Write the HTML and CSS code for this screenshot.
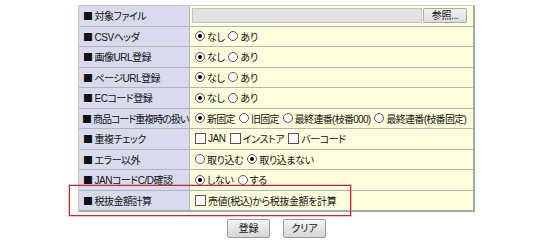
FILE: index.html
```html
<!DOCTYPE html>
<html lang="ja">
<head>
<meta charset="utf-8">
<link rel="stylesheet" href="styles.css">
</head>
<body>
<div class="page">
  <div class="form">
    <div class="lbl"><span class="sq">■</span>対象ファイル</div>
    <div class="val file"><span class="field"></span><span class="browse">参照...</span></div>

    <div class="lbl"><span class="sq">■</span>CSVヘッダ</div>
    <div class="val"><span class="opt"><i class="radio on"></i>なし</span><span class="opt"><i class="radio"></i>あり</span></div>

    <div class="lbl"><span class="sq">■</span>画像URL登録</div>
    <div class="val"><span class="opt"><i class="radio on"></i>なし</span><span class="opt"><i class="radio"></i>あり</span></div>

    <div class="lbl"><span class="sq">■</span>ページURL登録</div>
    <div class="val"><span class="opt"><i class="radio on"></i>なし</span><span class="opt"><i class="radio"></i>あり</span></div>

    <div class="lbl"><span class="sq">■</span>ECコード登録</div>
    <div class="val"><span class="opt"><i class="radio on"></i>なし</span><span class="opt"><i class="radio"></i>あり</span></div>

    <div class="lbl tight"><span class="sq">■</span>商品コード重複時の扱い</div>
    <div class="val tight"><span class="opt"><i class="radio on"></i>新固定</span><span class="opt"><i class="radio"></i>旧固定</span><span class="opt"><i class="radio"></i>最終連番(枝番000)</span><span class="opt"><i class="radio"></i>最終連番(枝番固定)</span></div>

    <div class="lbl"><span class="sq">■</span>重複チェック</div>
    <div class="val"><span class="opt"><i class="check"></i>JAN</span><span class="opt"><i class="check"></i>インストア</span><span class="opt"><i class="check"></i>バーコード</span></div>

    <div class="lbl"><span class="sq">■</span>エラー以外</div>
    <div class="val"><span class="opt"><i class="radio"></i>取り込む</span><span class="opt"><i class="radio on"></i>取り込まない</span></div>

    <div class="lbl"><span class="sq">■</span>JANコードC/D確認</div>
    <div class="val"><span class="opt"><i class="radio on"></i>しない</span><span class="opt"><i class="radio"></i>する</span></div>

    <div class="lbl"><span class="sq">■</span>税抜金額計算</div>
    <div class="val"><span class="opt"><i class="check"></i>売値(税込)から税抜金額を計算</span></div>

    <div class="highlight"></div>
  </div>
  <div class="buttons">
    <span class="btn">登録</span>
    <span class="btn">クリア</span>
  </div>
</div>
</body>
</html>
```

FILE: styles.css
```css
html, body {
  margin: 0;
  padding: 0;
  background: #ffffff;
}
body {
  padding-left: 3px;
  font-family: "Liberation Sans", "Noto Sans CJK JP", sans-serif;
  font-feature-settings: "palt";
  font-size: 10px;
  color: #111;
}
.page {
  width: 397px;
  margin: 5px auto 0;
}
.form {
  position: relative;
  display: grid;
  grid-template-columns: 110px 1fr;
  grid-auto-rows: 19.5px;
  gap: 1px;
  background: #b4b4b4;
  border-top: 1px solid #c8c8c8;
  border-left: 1px solid #c8c8c8;
  border-right: 2px solid #a8a8a8;
  border-bottom: 2px solid #a8a8a8;
}
.sq {
  font-family: "Noto Sans CJK JP", sans-serif;
  font-size: 10px;
  margin-right: 2px;
}
.lbl {
  background: #d8dbee;
  display: flex;
  align-items: center;
  padding-left: 4px;
  white-space: nowrap;
  letter-spacing: -0.5px;
}
.lbl.tight {
  padding-left: 3px;
  letter-spacing: -1px;
}
.val {
  background: #ffffdd;
  display: flex;
  align-items: center;
  padding-left: 5px;
  gap: 4px;
  white-space: nowrap;
  letter-spacing: -0.4px;
}
.val.tight {
  letter-spacing: -0.7px;
}
.opt {
  display: inline-flex;
  align-items: center;
  gap: 2px;
}
.radio {
  width: 10px;
  height: 10px;
  border: 1px solid #555;
  border-radius: 50%;
  background: #fff;
  box-sizing: border-box;
  position: relative;
  display: inline-block;
}
.radio.on::after {
  content: "";
  position: absolute;
  left: 2px;
  top: 2px;
  width: 4px;
  height: 4px;
  border-radius: 50%;
  background: #000;
}
.check {
  width: 11px;
  height: 11px;
  border: 1px solid #555;
  background: #fff;
  box-sizing: border-box;
  display: inline-block;
}
.file {
  padding-left: 2px;
  gap: 1px;
}
.field {
  width: 228px;
  height: 13px;
  background: #e2e2e2;
  border: 1px solid #c4c4c4;
}
.browse {
  width: 42px;
  height: 13px;
  background: linear-gradient(#f4f4f4, #dcdcdc);
  border: 1px solid #a8a8a8;
  border-radius: 2px;
  font-size: 10px;
  line-height: 13px;
  text-align: center;
}
.highlight {
  position: absolute;
  left: -10px;
  top: 179px;
  width: 280px;
  height: 29px;
  border: 1px solid #cc2233;
  box-shadow: 0 0 0 0.5px #e08088;
  pointer-events: none;
}
.buttons {
  display: flex;
  justify-content: center;
  gap: 13px;
  margin-top: 7px;
}
.btn {
  width: 41px;
  height: 17px;
  border: 1px solid #9a9a9a;
  border-radius: 2px;
  background: linear-gradient(#f4f4f4, #d6d6d6);
  font-size: 10px;
  line-height: 17px;
  text-align: center;
}
```
